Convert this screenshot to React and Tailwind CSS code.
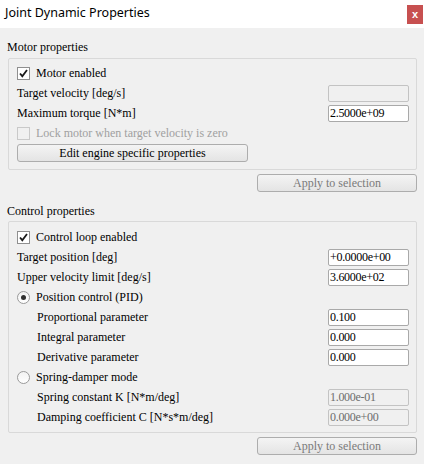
import React from "react";

function Check({ checked, disabled }) {
  return (
    <span
      className={`w-[13px] h-[13px] border flex items-center justify-center shrink-0 ${
        disabled ? "border-[#c9c9c9] bg-[#f0f0f0]" : "border-[#8f8f8f] bg-white"
      }`}
    >
      {checked && (
        <svg width="11" height="11" viewBox="0 0 11 11">
          <path d="M2 5.5 L4.3 8.2 L9 2" fill="none" stroke="#1a1a1a" strokeWidth="1.8" />
        </svg>
      )}
    </span>
  );
}

function Radio({ checked }) {
  return (
    <span className="w-[13px] h-[13px] rounded-full border border-[#9a9a9a] bg-gradient-to-b from-[#f2f2f2] to-white flex items-center justify-center shrink-0">
      {checked && <span className="w-[5px] h-[5px] rounded-full bg-[#303030]" />}
    </span>
  );
}

function Input({ value, disabled }) {
  return (
    <div
      className={`w-[81px] h-[17px] border rounded-[2px] pl-[1px] text-[12px] leading-[15px] tracking-[-0.3px] font-['Liberation_Serif','Times_New_Roman',serif] ${
        disabled ? "border-[#c3c3c3] bg-[#f0f0f0] text-[#6d6d6d]" : "border-[#a9a9a9] bg-white text-black"
      }`}
    >
      {value}
    </div>
  );
}

function Row({ children, input, indent }) {
  return (
    <div className={`h-[20px] flex items-center justify-between pr-[7px] ${indent ? "pl-[28px]" : "pl-[8px]"}`}>
      <div className="flex items-center gap-[6px] text-[12px]">{children}</div>
      {input}
    </div>
  );
}

function Button({ children, disabled, className }) {
  return (
    <div
      className={`h-[18px] border border-[#adadad] rounded-[3px] bg-gradient-to-b from-[#f4f4f4] to-[#e4e4e4] flex items-center justify-center text-[12px] ${
        disabled ? "text-[#7a7a7a]" : "text-black"
      } ${className}`}
    >
      {children}
    </div>
  );
}

export default function App() {
  return (
    <div className="w-[424px] h-[464px] bg-[#f0f0f0] flex flex-col overflow-hidden font-['Liberation_Serif','Times_New_Roman',serif]">
      <div className="h-[28px] bg-white flex items-start justify-between shrink-0">
        <div className="pl-[5px] pt-[5px] text-[12.5px] leading-[16px] text-black font-['Noto_Sans','Open_Sans',sans-serif]">
          Joint Dynamic Properties
        </div>
        <div className="mt-[5px] mr-[1px] w-[16px] h-[19px] bg-[#c75050] flex items-center justify-center text-white text-[11px] font-bold leading-none font-['Liberation_Sans',Arial,sans-serif]">
          x
        </div>
      </div>

      <div className="px-[8px] flex flex-col text-black">
        <div className="mt-[11px] mb-[3px] h-[16px] leading-[16px] text-[12px] -ml-[1px]">Motor properties</div>
        <div className="w-[409px] border border-[#d9d9d9] rounded-[2px] pt-[4px] pb-[6px] flex flex-col">
          <Row>
            <Check checked />
            <span>Motor enabled</span>
          </Row>
          <Row input={<Input value="" disabled />}>
            <span>Target velocity [deg/s]</span>
          </Row>
          <Row input={<Input value="2.5000e+09" />}>
            <span>Maximum torque [N*m]</span>
          </Row>
          <Row>
            <Check disabled />
            <span className="text-[#a0a0a0]">Lock motor when target velocity is zero</span>
          </Row>
          <div className="h-[20px] flex items-center pl-[8px]">
            <Button className="w-[231px]">Edit engine specific properties</Button>
          </div>
        </div>
        <div className="flex justify-end w-[409px] mt-[4px]">
          <Button disabled className="w-[160px]">Apply to selection</Button>
        </div>

        <div className="mt-[11px] mb-[2px] h-[16px] leading-[16px] text-[12px] -ml-[1px]">Control properties</div>
        <div className="w-[409px] border border-[#d9d9d9] rounded-[2px] pt-[5px] pb-[5px] flex flex-col">
          <Row>
            <Check checked />
            <span>Control loop enabled</span>
          </Row>
          <Row input={<Input value="+0.0000e+00" />}>
            <span>Target position [deg]</span>
          </Row>
          <Row input={<Input value="3.6000e+02" />}>
            <span>Upper velocity limit [deg/s]</span>
          </Row>
          <Row>
            <Radio checked />
            <span>Position control (PID)</span>
          </Row>
          <Row indent input={<Input value="0.100" />}>
            <span>Proportional parameter</span>
          </Row>
          <Row indent input={<Input value="0.000" />}>
            <span>Integral parameter</span>
          </Row>
          <Row indent input={<Input value="0.000" />}>
            <span>Derivative parameter</span>
          </Row>
          <Row>
            <Radio />
            <span>Spring-damper mode</span>
          </Row>
          <Row indent input={<Input value="1.000e-01" disabled />}>
            <span>Spring constant K [N*m/deg]</span>
          </Row>
          <Row indent input={<Input value="0.000e+00" disabled />}>
            <span>Damping coefficient C [N*s*m/deg]</span>
          </Row>
        </div>
        <div className="flex justify-end w-[409px] mt-[4px]">
          <Button disabled className="w-[160px]">Apply to selection</Button>
        </div>
      </div>
    </div>
  );
}
